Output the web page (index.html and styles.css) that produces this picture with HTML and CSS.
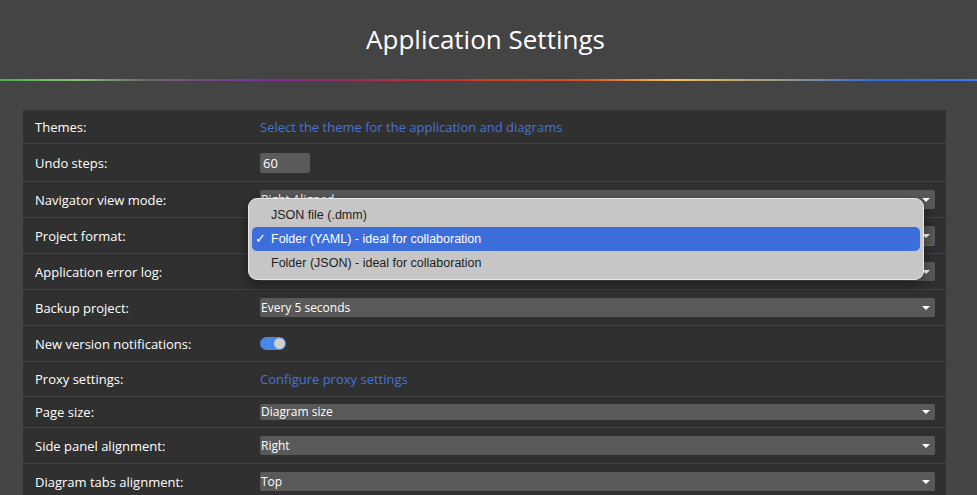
FILE: index.html
```html
<!DOCTYPE html>
<html lang="en">
<head>
    <meta charset="UTF-8">
    <meta name="viewport" content="width=device-width, initial-scale=1.0">
    <title>Application Settings</title>
    <link rel="stylesheet" href="styles.css">
</head>
<body>
    <header class="header">
        <h1>Application Settings</h1>
    </header>
    <div class="rainbow"></div>

    <div class="panel">
        <div class="row row-first">
            <div class="label">Themes:</div>
            <div class="value"><a class="link" href="#">Select the theme for the application and diagrams</a></div>
        </div>
        <div class="row row-tall">
            <div class="label">Undo steps:</div>
            <div class="value"><input class="number" type="text" value="60"></div>
        </div>
        <div class="row">
            <div class="label">Navigator view mode:</div>
            <div class="value"><div class="select">Right Aligned</div></div>
        </div>
        <div class="row row-menu">
            <div class="label">Project format:</div>
            <div class="value"><div class="select focused"></div></div>

            <!-- native popup that is open over the rows -->
            <div class="menu">
                <div class="menu-item">JSON file (.dmm)</div>
                <div class="menu-item selected"><span class="check">✓</span>Folder (YAML) - ideal for collaboration</div>
                <div class="menu-item">Folder (JSON) - ideal for collaboration</div>
            </div>
        </div>
        <div class="row">
            <div class="label">Application error log:</div>
            <div class="value"><div class="select"></div></div>
        </div>
        <div class="row">
            <div class="label">Backup project:</div>
            <div class="value"><div class="select">Every 5 seconds</div></div>
        </div>
        <div class="row">
            <div class="label">New version notifications:</div>
            <div class="value"><span class="toggle"><span class="knob"></span></span></div>
        </div>
        <div class="row row-link">
            <div class="label">Proxy settings:</div>
            <div class="value"><a class="link" href="#">Configure proxy settings</a></div>
        </div>
        <div class="row row-short">
            <div class="label">Page size:</div>
            <div class="value"><div class="select small">Diagram size</div></div>
        </div>
        <div class="row">
            <div class="label">Side panel alignment:</div>
            <div class="value"><div class="select">Right</div></div>
        </div>
        <div class="row">
            <div class="label">Diagram tabs alignment:</div>
            <div class="value"><div class="select">Top</div></div>
        </div>
    </div>
</body>
</html>
```

FILE: styles.css
```css
body {
    margin: 0;
    background: #444444;
    font-family: "Open Sans", Arial, sans-serif;
    color: #ffffff;
    overflow: hidden;
}
.header {
    height: 78px;
    display: flex;
    align-items: center;
    justify-content: center;
    padding: 0 6px 1px 0;
}
.header h1 {
    margin: 0;
    font-size: 26px;
    font-weight: 400;
    line-height: 36px;
}
.rainbow {
    height: 2px;
    background: linear-gradient(to right, #4caf50 0%, #8bc07a 8%, #6a6a6a 15%, #7b2f9a 27%, #9a2c5a 36%, #d0342a 48%, #d8562a 60%, #f0c060 69%, #9a9a88 80%, #2f6be0 90%, #3f7cf0 100%);
}
.panel {
    margin: 29px 31px 0 23px;
    background: #303030;
}
.row {
    position: relative;
    display: flex;
    align-items: center;
    height: 35px;
    border-bottom: 1px solid #414141;
}
.row-first {
    height: 33px;
}
.row-tall {
    height: 37px;
}
.row-link {
    height: 34px;
}
.row-short {
    height: 30px;
}
.label {
    width: 225px;
    padding-left: 12px;
    font-size: 13px;
}
.value {
    flex: 1;
    padding-right: 11px;
    display: flex;
    align-items: center;
}
.link {
    color: #4673d6;
    text-decoration: none;
    font-size: 13px;
}
.number {
    width: 50px;
    height: 20px;
    box-sizing: border-box;
    border: none;
    border-radius: 2px;
    background: #5a5a5a;
    color: #ffffff;
    font-family: "Open Sans", Arial, sans-serif;
    font-size: 13px;
    padding: 0 3px;
    outline: none;
}
.select {
    position: relative;
    flex: 1;
    height: 19px;
    line-height: 19px;
    border-radius: 2px;
    background: #595959;
    font-size: 12px;
    padding-left: 1px;
}
.select.small {
    height: 16px;
    line-height: 16px;
    margin-top: -1px;
}
.select::after {
    content: "";
    position: absolute;
    right: 5px;
    top: 50%;
    margin-top: -2px;
    border-left: 4px solid transparent;
    border-right: 4px solid transparent;
    border-top: 4px solid #ffffff;
}
.select.focused {
    box-shadow: 0 1px 0 #3b6ddb;
}
.toggle {
    position: relative;
    display: inline-block;
    width: 26px;
    height: 13px;
    border-radius: 7px;
    background: #4a86e8;
}
.knob {
    position: absolute;
    right: 1px;
    top: 1px;
    width: 11px;
    height: 11px;
    border-radius: 50%;
    background: #cfcfcf;
}
.menu {
    position: absolute;
    left: 225px;
    top: -20px;
    width: 668px;
    padding: 4px 3px;
    background: #c6c6c6;
    border: 1px solid #e6e6e6;
    border-radius: 9px;
    box-shadow: 0 4px 14px rgba(0,0,0,0.45);
    font-family: "Liberation Sans", Arial, sans-serif;
    font-size: 12.5px;
    color: #1e1e1e;
    z-index: 2;
}
.menu-item {
    position: relative;
    height: 24px;
    line-height: 24px;
    padding-left: 19px;
    border-radius: 5px;
}
.menu-item.selected {
    background: #3b6ddb;
    color: #ffffff;
}
.check {
    position: absolute;
    left: 3px;
    font-size: 13px;
}
```
